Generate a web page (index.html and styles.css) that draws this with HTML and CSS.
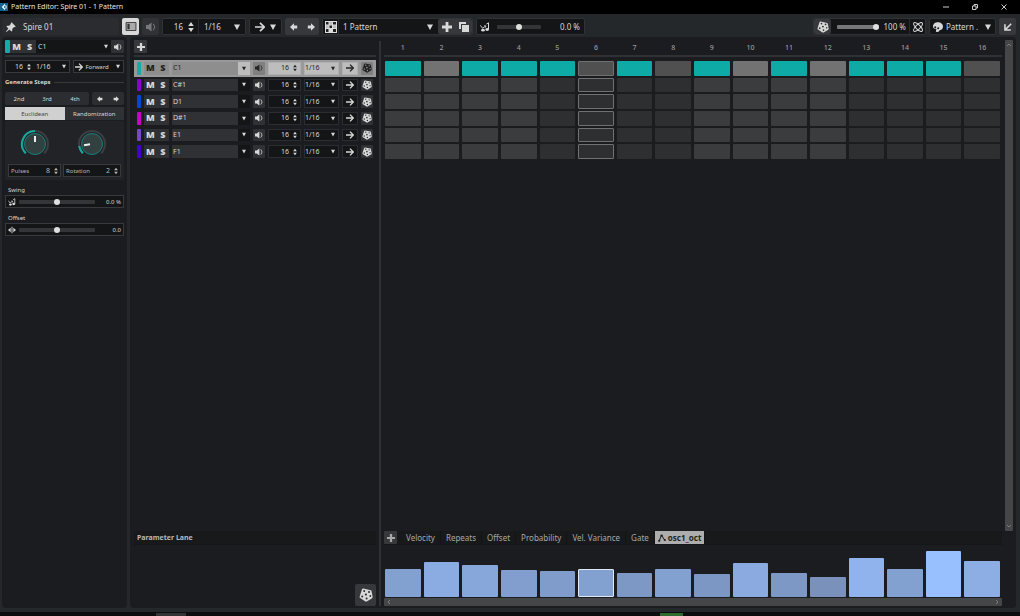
FILE: index.html
```html
<!DOCTYPE html>
<html lang="en">
<head>
    <meta charset="UTF-8">
    <title>Pattern Editor: Spire 01 - 1 Pattern</title>
    <link rel="stylesheet" href="styles.css">
</head>
<body>
<svg class="defs" aria-hidden="true">
    <symbol id="caret" viewBox="0 0 6 6"><path d="M0 .5h6L3 6z"/></symbol>
    <symbol id="updown" viewBox="0 0 6 10"><path d="M3 0l2.8 4H.2zM3 10L.2 6h5.6z"/></symbol>
    <symbol id="plus" viewBox="0 0 10 10"><path d="M3.6 0h2.8v3.6H10v2.8H6.4V10H3.6V6.4H0V3.6h3.6z"/></symbol>
    <symbol id="speaker" viewBox="0 0 10 10"><path d="M0 3h2.2L5.500.5v9L2.2 7H0z"/><path d="M7.300 1.800q3 3.200 0 6.400" fill="none" stroke="currentColor"/></symbol>
    <symbol id="arrow" viewBox="0 0 10 10"><path d="M0 5h9M5 .8L9.2 5 5 9.2" fill="none" stroke="currentColor" stroke-width="1.7"/></symbol>
    <symbol id="left" viewBox="0 0 10 10"><path d="M0 5l5-4.600v2.600h4v4H5v2.600z"/></symbol>
    <symbol id="right" viewBox="0 0 10 10"><path d="M10 5L5 .4V3H1v4h4v2.600z"/></symbol>
    <symbol id="dice" viewBox="0 0 14 14"><path d="M4.2.6l7.6 1.6q1 .3.8 1.2l1 5.4q.2.8-.5 1.4l-5.3 3.2q-.7.3-1.4 0L1.2 10Q.4 9.5.6 8.7L3 1.300Q3.300.5 4.200.6z"/><g class="dots"><circle cx="5.200" cy="3" r="1"/><circle cx="10" cy="4" r="1"/><circle cx="6.900" cy="6.500" r="1.100"/><circle cx="3.200" cy="8.400" r="1"/><circle cx="7.600" cy="10.600" r="1"/><circle cx="11.300" cy="8" r=".9"/></g></symbol>
    <symbol id="pin" viewBox="0 0 10 10"><path d="M5.600.3l4.100 4.100-1 .8-.7-.1-1.800 1.800.1 1.900-.9.800-2-2L.4 10 0 9.600l2.400-3-2-2 .8-.9 1.900.1L4.900 2l-.1-.8z"/></symbol>
    <symbol id="swing" viewBox="0 0 12 12"><path d="M.5 4l2.500 3.500L6.500 5M5 4.500l2 .2-.6 2" fill="none" stroke="currentColor" stroke-width="1.100"/><ellipse cx="3.600" cy="9.800" rx="2.200" ry="1.700"/><ellipse cx="8.600" cy="9" rx="2.200" ry="1.700"/><path d="M10.200 9V1L7.800 2.500" fill="none" stroke="currentColor" stroke-width="1.200"/></symbol>
    <symbol id="offset" viewBox="0 0 12 10"><path d="M0 5l4-3.500v7zM12 5L8 1.500v7zM5.300 0h1.400v10H5.300z"/></symbol>
</svg>

<header class="titlebar">
    <svg class="logo" viewBox="0 0 8 8"><rect width="8" height="8" fill="#14628f"/><path d="M5 .8L1.600 4 5 7.200V5.400h1.600V2.600H5z" fill="#e8f4fa"/><circle cx="4.800" cy="4" r=".9" fill="#14628f"/></svg>
    <h1>Pattern Editor: Spire 01 - 1 Pattern</h1>
    <button aria-label="Minimize"><svg viewBox="0 0 6 6"><path d="M0 3h6"/></svg></button>
    <button aria-label="Restore"><svg viewBox="0 0 6 6"><path d="M.5 2h3.500v3.500H.5zM2 2V.5h3.500V4H4"/></svg></button>
    <button aria-label="Close"><svg viewBox="0 0 6 6"><path d="M.5.5l5 5M5.500.5l-5 5"/></svg></button>
</header>

<div class="toolbar">
    <div class="plugin">
        <svg class="i10"><use href="#pin"/></svg>
        <span>Spire 01</span>
    </div>
    <button class="tool light" aria-label="Show inspector"><svg class="zone" viewBox="0 0 12 10"><path d="M.5.5h11v9H.5z" fill="#aaa" stroke="#333"/><path d="M2 2h2.500v6H2z" fill="#333"/></svg></button>
    <button class="tool dim" aria-label="Preview"><svg class="i10"><use href="#speaker"/></svg></button>
    <div class="box steps-box">
        <label class="spin"><input value="16" aria-label="Steps"><svg><use href="#updown"/></svg></label>
        <label class="drop ruled"><select aria-label="Resolution"><option>1/16</option></select><svg><use href="#caret"/></svg></label>
    </div>
    <button class="box direction" aria-label="Playback direction"><svg class="i10"><use href="#arrow"/></svg><svg class="i6"><use href="#caret"/></svg></button>
    <div class="group">
        <button aria-label="Shift left"><svg class="i8"><use href="#left"/></svg></button>
        <button aria-label="Shift right"><svg class="i8"><use href="#right"/></svg></button>
    </div>
    <div class="box pattern-box">
        <button class="banks" aria-label="Pattern banks"><svg viewBox="0 0 12 12"><path d="M0 0h12v12H0z" fill="#ddd"/><path d="M1 1h2.500v2.500H1zM4.500 4.500H7V7H4.500zM8 1h3v2.500H8zM1 8h2.500v3H1zM8 8h3v3H8z" fill="#222"/><path d="M4.500 1H7v2.500H4.500zM1 4.500h2.500V7H1zM8 4.500h3V7H8z" fill="#bbb"/></svg></button>
        <label class="drop"><select aria-label="Pattern"><option>1 Pattern</option></select><svg><use href="#caret"/></svg></label>
        <div class="group">
            <button aria-label="Add pattern"><svg class="i10"><use href="#plus"/></svg></button>
            <button aria-label="Duplicate pattern"><svg class="i10" viewBox="0 0 10 10"><path d="M0 0h7v2H2v5H0z"/><path d="M3 3h7v7H3z"/></svg></button>
        </div>
    </div>
    <label class="box swing-box">
        <svg class="i10"><use href="#swing"/></svg>
        <input type="range" value="50" aria-label="Swing">
        <output>0.0 %</output>
    </label>
    <div class="spacer"></div>
    <div class="box random-box">
        <button class="tool" aria-label="Randomize"><svg class="i12"><use href="#dice"/></svg></button>
        <input type="range" class="filled" value="100" aria-label="Random amount">
        <output>100 %</output>
        <button class="scope ruled" aria-label="Random scope"><svg class="i10" viewBox="0 0 12 12"><g fill="none" stroke="currentColor" stroke-width="1.200"><ellipse cx="6" cy="6" rx="7" ry="2.600" transform="rotate(45 6 6)"/><ellipse cx="6" cy="6" rx="7" ry="2.600" transform="rotate(-45 6 6)"/></g></svg></button>
    </div>
    <div class="box color-box">
        <svg class="i10" viewBox="0 0 10 10"><path d="M0 4.500C0 1.700 2.300.2 5 .2s5 1.800 5 4.300S8.300 8 7.300 8 6.300 10 4.300 10 3 8.300 3.500 7.500 0 7.300 0 4.500z"/><g fill="#141517"><circle cx="2.200" cy="5.300" r="1"/><circle cx="5.200" cy="6.300" r="1"/></g></svg>
        <label class="drop"><select aria-label="Color scheme"><option>Pattern .</option></select><svg><use href="#caret"/></svg></label>
    </div>
    <button class="tool" aria-label="Dock"><svg class="i8" viewBox="0 0 10 10"><path d="M9 1L2 8M1.200 1.500v7.300h7.300" fill="none" stroke="currentColor" stroke-width="2"/></svg></button>
</div>

<main>
    <aside class="panel inspector">
        <div class="lane-head">
            <span class="chip"></span>
            <div class="ms"><button>M</button><button>S</button></div>
            <label class="drop"><select aria-label="Lane"><option>C1</option></select><svg><use href="#caret"/></svg></label>
            <button class="mini" aria-label="Audition"><svg class="i8"><use href="#speaker"/></svg></button>
        </div>
        <div class="line-up">
            <div class="field timing">
                <label class="spin"><input value="16" aria-label="Lane steps"><svg><use href="#updown"/></svg></label>
                <label class="drop"><select aria-label="Lane resolution"><option>1/16</option></select><svg><use href="#caret"/></svg></label>
            </div>
            <div class="field forward">
                <svg class="i8"><use href="#arrow"/></svg>
                <label class="drop"><select aria-label="Lane direction"><option>Forward</option></select><svg><use href="#caret"/></svg></label>
            </div>
        </div>
        <h2>Generate Steps</h2>
        <div class="line-up">
            <div class="group nth"><button>2nd</button><button>3rd</button><button>4th</button></div>
            <div class="group shift">
                <button aria-label="Shift steps left"><svg class="i6"><use href="#left"/></svg></button>
                <button aria-label="Shift steps right"><svg class="i6"><use href="#right"/></svg></button>
            </div>
        </div>
        <div class="modes"><button class="active">Euclidean</button><button>Randomization</button></div>
        <div class="knobs">
            <div class="knob">
                <svg viewBox="0 0 30 30" role="slider" aria-label="Pulses knob" aria-valuenow="8">
                    <path class="range" d="M5.800 24.200A13 13 0 1 1 24.200 24.200"/>
                    <path class="value" d="M5.800 24.200A13 13 0 0 1 15 2"/>
                    <circle cx="15" cy="15" r="10.500"/>
                    <path class="hand" d="M15 13V7"/>
                </svg>
                <label class="field"><span>Pulses</span><span class="spin"><input value="8"><svg><use href="#updown"/></svg></span></label>
            </div>
            <div class="knob">
                <svg viewBox="0 0 30 30" role="slider" aria-label="Rotation knob" aria-valuenow="2">
                    <path class="range" d="M5.800 24.200A13 13 0 1 1 24.200 24.200"/>
                    <path class="value" d="M5.800 24.200A13 13 0 0 1 2.200 17"/>
                    <circle cx="15" cy="15" r="10.500"/>
                    <path class="hand" d="M13 15.300L7 16.200"/>
                </svg>
                <label class="field"><span>Rotation</span><span class="spin"><input value="2"><svg><use href="#updown"/></svg></span></label>
            </div>
        </div>
        <label class="caption" for="swing">Swing</label>
        <div class="field slide"><svg class="i8"><use href="#swing"/></svg><input type="range" id="swing" value="50"><output>0.0 %</output></div>
        <label class="caption" for="offset">Offset</label>
        <div class="field slide"><svg class="i8"><use href="#offset"/></svg><input type="range" id="offset" value="50"><output>0.0</output></div>
    </aside>

    <section class="panel editor">
        <div class="tracks">
            <div class="head"><button class="add" aria-label="Add lane"><svg class="i8"><use href="#plus"/></svg></button></div>
            <div id="tracks"></div>
        </div>
        <div class="divider"></div>
        <div class="pattern">
            <div class="head" id="numbers"></div>
            <div id="cells"></div>
        </div>
        <div class="scroll-y">
            <svg viewBox="0 0 6 4"><path d="M1 3l2-2 2 2"/></svg>
            <svg viewBox="0 0 6 4"><path d="M1 1l2 2 2-2"/></svg>
        </div>
        <div class="lane-title">
            <h3>Parameter Lane</h3>
            <button class="roll" aria-label="Randomize lane"><svg><use href="#dice"/></svg></button>
        </div>
        <div class="lane">
            <nav class="tabs">
                <button class="add" aria-label="Add parameter"><svg class="i8"><use href="#plus"/></svg></button>
                <button>Velocity</button>
                <button>Repeats</button>
                <button>Offset</button>
                <button>Probability</button>
                <button>Vel. Variance</button>
                <button>Gate</button>
                <button class="active"><svg class="i8" viewBox="0 0 10 10"><path d="M1 8.500C3 8 3 2 4.500 2S6 7 9 7.500" fill="none" stroke="currentColor" stroke-width="1.300"/><circle cx="1.500" cy="8.500" r="1.400"/><circle cx="4.500" cy="2" r="1.500"/><circle cx="8.500" cy="7.500" r="1.400"/></svg>osc1_oct</button>
            </nav>
            <div id="bars"></div>
            <div class="scroll-x">
                <svg viewBox="0 0 4 6"><path d="M3 1L1 3l2 2"/></svg>
                <svg viewBox="0 0 4 6"><path d="M1 1l2 2-2 2"/></svg>
            </div>
        </div>
    </section>
</main>

<footer><span></span><span class="meter"></span></footer>

<script src="editor.js"></script>
</body>
</html>
```
FILE: styles.css
```css
* {
    box-sizing: border-box;
    margin: 0;
    padding: 0;
}

body {
    display: flex;
    flex-direction: column;
    min-height: 100vh;
    background: #24282b;
    color: #d8d8d8;
    font: 6px/10px "Noto Sans", sans-serif;
}

button, input, select {
    border: 0;
    background: none;
    color: inherit;
    font: inherit;
    min-width: 0;
}

button {
    display: flex;
    align-items: center;
    justify-content: center;
}

svg {
    display: block;
    flex: none;
    fill: currentColor;
}

.defs { position: absolute; width: 0; height: 0; }
.dots { fill: var(--dots, #2d2e31); }
.i6 { width: 6px; height: 6px; }
.i8 { width: 8px; height: 8px; }
.i10 { width: 10px; height: 10px; }
.i12 { width: 12px; height: 12px; }

/* shared controls */

.drop {
    display: flex;
    flex: 1;
    align-items: center;
    min-width: 0;
    padding: 0 5px;
}

.drop select {
    appearance: none;
    flex: 1;
    outline: 0;
}

.drop svg {
    width: 4px;
    height: 5px;
    pointer-events: none;
}

.spin {
    display: flex;
    align-items: center;
    gap: 4px;
}

.spin input {
    flex: 1;
    width: 20px;
    text-align: right;
}

.spin svg {
    width: 4px;
    height: 8px;
}

input[type=range] {
    appearance: none;
    flex: 1;
    height: 6px;
}

input[type=range]::-webkit-slider-runnable-track {
    height: 4px;
    background: #343538;
    border-radius: 1px;
}

input[type=range].filled::-webkit-slider-runnable-track {
    background: #777;
}

input[type=range]::-webkit-slider-thumb {
    appearance: none;
    width: 6px;
    height: 6px;
    margin-top: -1px;
    border-radius: 50%;
    background: #e0e0e0;
}

output { text-align: right; }

.group {
    display: flex;
    background: #37383c;
    border-radius: 2px;
}

.group button { flex: 1; }

/* title bar */

.titlebar {
    display: flex;
    align-items: center;
    height: 14px;
    padding-right: 2px;
    background: #000;
}

.logo {
    width: 8px;
    height: 8px;
    margin-right: 3px;
}

.titlebar h1 {
    flex: 1;
    font-size: 7px;
    font-weight: 400;
    color: #e8e8e8;
}

.titlebar button {
    width: 29px;
    height: 14px;
}

.titlebar button svg {
    width: 6px;
    height: 6px;
    fill: none;
    stroke: #ccc;
}

/* toolbar */

.toolbar {
    display: flex;
    gap: 3px;
    height: 23px;
    padding: 4px 4px 2px 2px;
    font-size: 8px;
}

.plugin {
    display: flex;
    align-items: center;
    gap: 7px;
    width: 117px;
    padding-left: 4px;
    background: #2a2c30;
    border-radius: 2px;
}

.tool {
    width: 17px;
    background: #37383c;
    border-radius: 2px;
}

.tool.light { background: #d8d8d8; }
.tool.dim { color: #77787a; background: #303236; }
.zone { width: 12px; height: 9px; }

.box {
    display: flex;
    align-items: center;
    background: #141517;
    border: 1px solid #303235;
    border-radius: 2px;
}

.ruled {
    border-left: 1px solid #2a2b2e;
    height: 100%;
}

.toolbar .drop svg, .direction .i6 { width: 6px; height: 6px; }
.toolbar .spin { width: 35px; padding-right: 4px; gap: 5px; }
.toolbar .spin svg { width: 6px; height: 10px; }
.steps-box { width: 84px; }
.direction { width: 33px; justify-content: space-evenly; }
.toolbar > .group { width: 34px; }
.pattern-box { width: 151px; }
.pattern-box .banks { width: 16px; height: 100%; border-right: 1px solid #2a2b2e; }
.banks svg { width: 12px; height: 12px; }
.pattern-box .drop { padding-left: 4px; }
.pattern-box .group { width: 34px; height: 100%; }
.swing-box { width: 109px; gap: 7px; padding: 0 4px 0 3px; }
.swing-box output { width: 28px; }
.swing-box input { margin-right: 4px; }
.spacer { flex: 1; }
.random-box { width: 113px; }
.random-box .tool { height: 100%; }
.random-box input { margin: 0 3px 0 6px; }
.random-box output { width: 24px; margin-right: 3px; }
.random-box .scope { width: 16px; }
.color-box { width: 67px; padding-left: 3px; }
.color-box .drop { padding: 0 4px 0 3px; }

/* panels */

main {
    display: flex;
    flex: 1;
    gap: 3px;
    padding: 0 4px 4px 2px;
}

.panel {
    background: #1b1c1f;
    border-radius: 4px;
}

.inspector {
    width: 125px;
    padding: 3px;
}

.lane-head {
    display: flex;
    height: 17px;
    padding-bottom: 2px;
    border-bottom: 2px solid #303134;
}

.chip {
    width: 5px;
    background: #14aaa5;
    border-radius: 1px;
}

.ms {
    display: flex;
    width: 26px;
    background: #303135;
    font: 800 9px/10px "Open Sans", sans-serif;
}

.ms button { flex: 1; }

.lane-head .drop, .field {
    background: #141517;
}

.lane-head .drop { padding: 0 3px 0 2px; }

.mini {
    width: 13px;
    background: #303135;
    border-radius: 1px;
}

.lane-head, .timing, .track { font-size: 7px; }

.line-up {
    display: flex;
    gap: 3px;
    height: 13px;
    margin-top: 3px;
}

.field {
    display: flex;
    align-items: center;
    border: 1px solid #38393d;
}

.timing { flex: 4; }
.timing .spin { width: 25px; }
.timing .drop { padding: 0 3px 0 5px; }
.forward { flex: 3; padding-left: 1px; }
.forward .drop { padding: 0 3px 0 2px; }

h2 {
    display: flex;
    align-items: center;
    gap: 3px;
    margin: 4px 0 5px;
    font-size: 6px;
    line-height: 10px;
}

h2::after {
    content: "";
    flex: 1;
    height: 1px;
    background: #38393c;
}

.inspector .group { background: #2c2d31; }
.nth { width: 84px; }
.shift { flex: 1; }

.modes {
    display: flex;
    height: 13px;
    margin-top: 2px;
}

.modes button {
    flex: 1;
    background: #303135;
}

.modes .active {
    background: #d0d0d0;
    color: #444;
}

.knobs {
    display: flex;
    gap: 2px;
    margin-top: 1px;
    padding: 8px 3px 3px;
    background: #222326;
    border-radius: 2px;
}

.knob {
    flex: 1;
    color: #b4b4b4;
}

.knob > svg {
    width: 30px;
    height: 30px;
    margin: 0 auto 5px;
    stroke-width: 2;
    fill: none;
}

.knob .range { stroke: #3c3e41; }
.knob .value { stroke: #14aaa0; }
.knob circle { fill: #32413f; stroke: #187f79; stroke-width: 1; }
.knob .hand { stroke: #eee; }

.knob .field {
    justify-content: space-between;
    height: 13px;
    padding: 0 2px;
}

.knob .spin { font-size: 7px; }

.caption {
    display: block;
    margin: 5px 3px 0;
}

.slide {
    height: 13px;
    margin-bottom: 4px;
    padding: 0 2px;
    gap: 3px;
}

.slide output { width: 23px; }

/* pattern editor */

.editor {
    display: grid;
    grid-template-columns: 242px 2px 1fr 8px;
    grid-template-rows: 1fr 75px;
    column-gap: 3px;
    flex: 1;
    padding: 3px 3px 2px 4px;
}

.head {
    display: flex;
    height: 17px;
    padding-bottom: 2px;
    border-bottom: 2px solid #303134;
    margin-bottom: 3px;
}

.add {
    width: 13px;
    height: 13px;
    background: #37383c;
    border-radius: 1px;
}

#tracks {
    display: grid;
    grid-template-rows: repeat(6, 1fr);
    height: 100px;
}

.track {
    display: flex;
    gap: 3px;
    padding: 2px 3px;
}

.track .chip { width: 4px; }
.track .ms { width: 25px; }
.track .name { width: 78px; flex: none; padding: 0 0 0 1px; background: #303135; }
.track .name span { display: flex; align-items: center; justify-content: center; width: 12px; height: 100%; background: #141517; }
.track .mini { width: 12px; }
.track .field { border-color: #2c2d30; }
.track .spin { width: 33px; padding-right: 3px; gap: 4px; }
.track .res { flex: 1; padding: 0 3px 0 0; }
.track .dir { width: 16px; justify-content: center; }

.track.selected {
    --dots: #999;
    background: #999;
    color: #222;
}

.track.selected .ms, .track.selected .name { background: #8e8e8e; }
.track.selected .mini { background: #808080; }
.track.selected .field, .track.selected .name span { background: #bdbdbd; border-color: #b0b0b0; }

.divider {
    grid-row: span 2;
    margin-top: 1px;
    background: #303134;
}

#numbers {
    display: grid;
    grid-template-columns: repeat(16, 1fr);
    gap: 3px;
    padding: 0 2px 2px 1px;
    font-size: 7px;
    font-weight: 500;
    line-height: 15px;
    text-align: center;
    color: #999;
}

#cells {
    display: grid;
    grid-template-columns: repeat(16, 1fr);
    grid-template-rows: repeat(6, 1fr);
    gap: 2px 3px;
    height: 100px;
    padding: 1px 2px 1px 1px;
}

#cells button {
    border-radius: 1px;
    background: #2e2f31;
}

#cells .beat { background: #3b3c3e; }
#cells .off { background: #505050; }
#cells .off.beat { background: #727272; }
#cells .on { background: #0eaaa6; }
#cells .cursor { border: 1px solid #707173; }

.scroll-y, .scroll-x {
    display: flex;
    justify-content: space-between;
    align-items: center;
    background: #454648;
    border-radius: 1px;
}

.scroll-y { flex-direction: column; padding: 3px 0; }
.scroll-y svg { width: 6px; height: 4px; }
.scroll-x { height: 8px; padding: 0 3px; }
.scroll-x svg { width: 4px; height: 6px; }
.scroll-y svg, .scroll-x svg { fill: none; stroke: #7b7c7e; }

.lane-title {
    display: flex;
    flex-direction: column;
    justify-content: space-between;
}

.lane-title h3, .tabs {
    height: 14px;
    background: #18191b;
    border-bottom: 1px solid #151618;
}

.lane-title h3 {
    padding-left: 3px;
    font-size: 7px;
    line-height: 14px;
    color: #b8b8b8;
}

.roll {
    align-self: flex-end;
    width: 21px;
    height: 22px;
    background: #37383c;
    border-radius: 2px;
}

.roll svg { width: 14px; height: 14px; }

.lane {
    display: flex;
    flex-direction: column;
}

.tabs {
    display: flex;
    font-size: 8px;
    color: #a8a8a8;
}

.tabs button + button {
    padding: 0 5px;
    border-right: 1px solid #131416;
}

.tabs button:nth-child(2) { margin-left: 4px; }

.tabs .active {
    gap: 2px;
    background: #adadad;
    color: #222;
    font-weight: 700;
}

.tabs .active.active { padding: 0 3px; }

#bars {
    display: grid;
    grid-template-columns: repeat(16, 1fr);
    gap: 3px;
    align-items: end;
    flex: 1;
    padding: 0 2px 1px 1px;
}

.bar { border-radius: 1px; }
.bar.cursor { border: 1px solid #e0e8f5; }

footer {
    display: flex;
    justify-content: space-between;
    height: 4px;
    padding: 1px 33% 0 156px;
    background: #0c0d0e;
}

footer span { width: 30px; background: #333; }
footer .meter { width: 23px; background: #2f6b2f; }
```
FILE: editor.js
```js
var lanes = [
    {name: 'C1', color: '#14aaa5'},
    {name: 'C#1', color: '#8a00d4'},
    {name: 'D1', color: '#0046d8'},
    {name: 'D#1', color: '#cc00cc'},
    {name: 'E1', color: '#7448c8'},
    {name: 'F1', color: '#4400cc'}
];
var steps = [1, 0, 1, 1, 1, 0, 1, 0, 1, 0, 1, 0, 1, 1, 1, 0];
var levels = [28, 35, 32, 27, 26, 28, 24, 28, 23, 34, 24, 20, 39, 28, 46, 36];
var cursor = 5;

var tracks = '';
var cells = '';
var numbers = '';
var bars = '';

function icon(id, size) {
    return '<svg class="' + (size || '') + '"><use href="#' + id + '"/></svg>';
}

for (var i = 0; i < lanes.length; i++) {
    var n = lanes[i].name;
    tracks += '<div class="track' + (i == 0 ? ' selected' : '') + '">' +
        '<span class="chip" style="background:' + lanes[i].color + '"></span>' +
        '<div class="ms"><button>M</button><button>S</button></div>' +
        '<label class="drop name"><select aria-label="Lane ' + n + '"><option>' + n + '</option></select><span>' + icon('caret') + '</span></label>' +
        '<button class="mini" aria-label="Audition ' + n + '">' + icon('speaker', 'i8') + '</button>' +
        '<label class="field spin"><input value="16" aria-label="Steps ' + n + '">' + icon('updown') + '</label>' +
        '<label class="field drop res"><select aria-label="Resolution ' + n + '"><option>1/16</option></select>' + icon('caret') + '</label>' +
        '<button class="field dir" aria-label="Direction ' + n + '">' + icon('arrow', 'i8') + '</button>' +
        '<button class="mini" aria-label="Randomize ' + n + '">' + icon('dice', 'i10') + '</button>' +
        '</div>';

    for (var j = 0; j < steps.length; j++) {
        var cls = j % 8 < 4 ? 'beat' : '';
        if (i == 0) cls += steps[j] ? ' on' : ' off';
        if (j == cursor) cls += ' cursor';
        cells += '<button class="' + cls + '" aria-label="' + n + ' step ' + (j + 1) + '"></button>';
    }
}

for (var k = 0; k < levels.length; k++) {
    var d = 46 - levels[k];
    var rgb = [152 - d * 1.2, 192 - d * 1.8, 255 - d * 2.6].map(Math.round);
    numbers += '<span>' + (k + 1) + '</span>';
    bars += '<div class="bar' + (k == cursor ? ' cursor' : '') + '" style="height:' + levels[k] + 'px;background-color:rgb(' + rgb + ')"></div>';
}

document.getElementById('tracks').innerHTML = tracks;
document.getElementById('cells').innerHTML = cells;
document.getElementById('numbers').innerHTML = numbers;
document.getElementById('bars').innerHTML = bars;
```
